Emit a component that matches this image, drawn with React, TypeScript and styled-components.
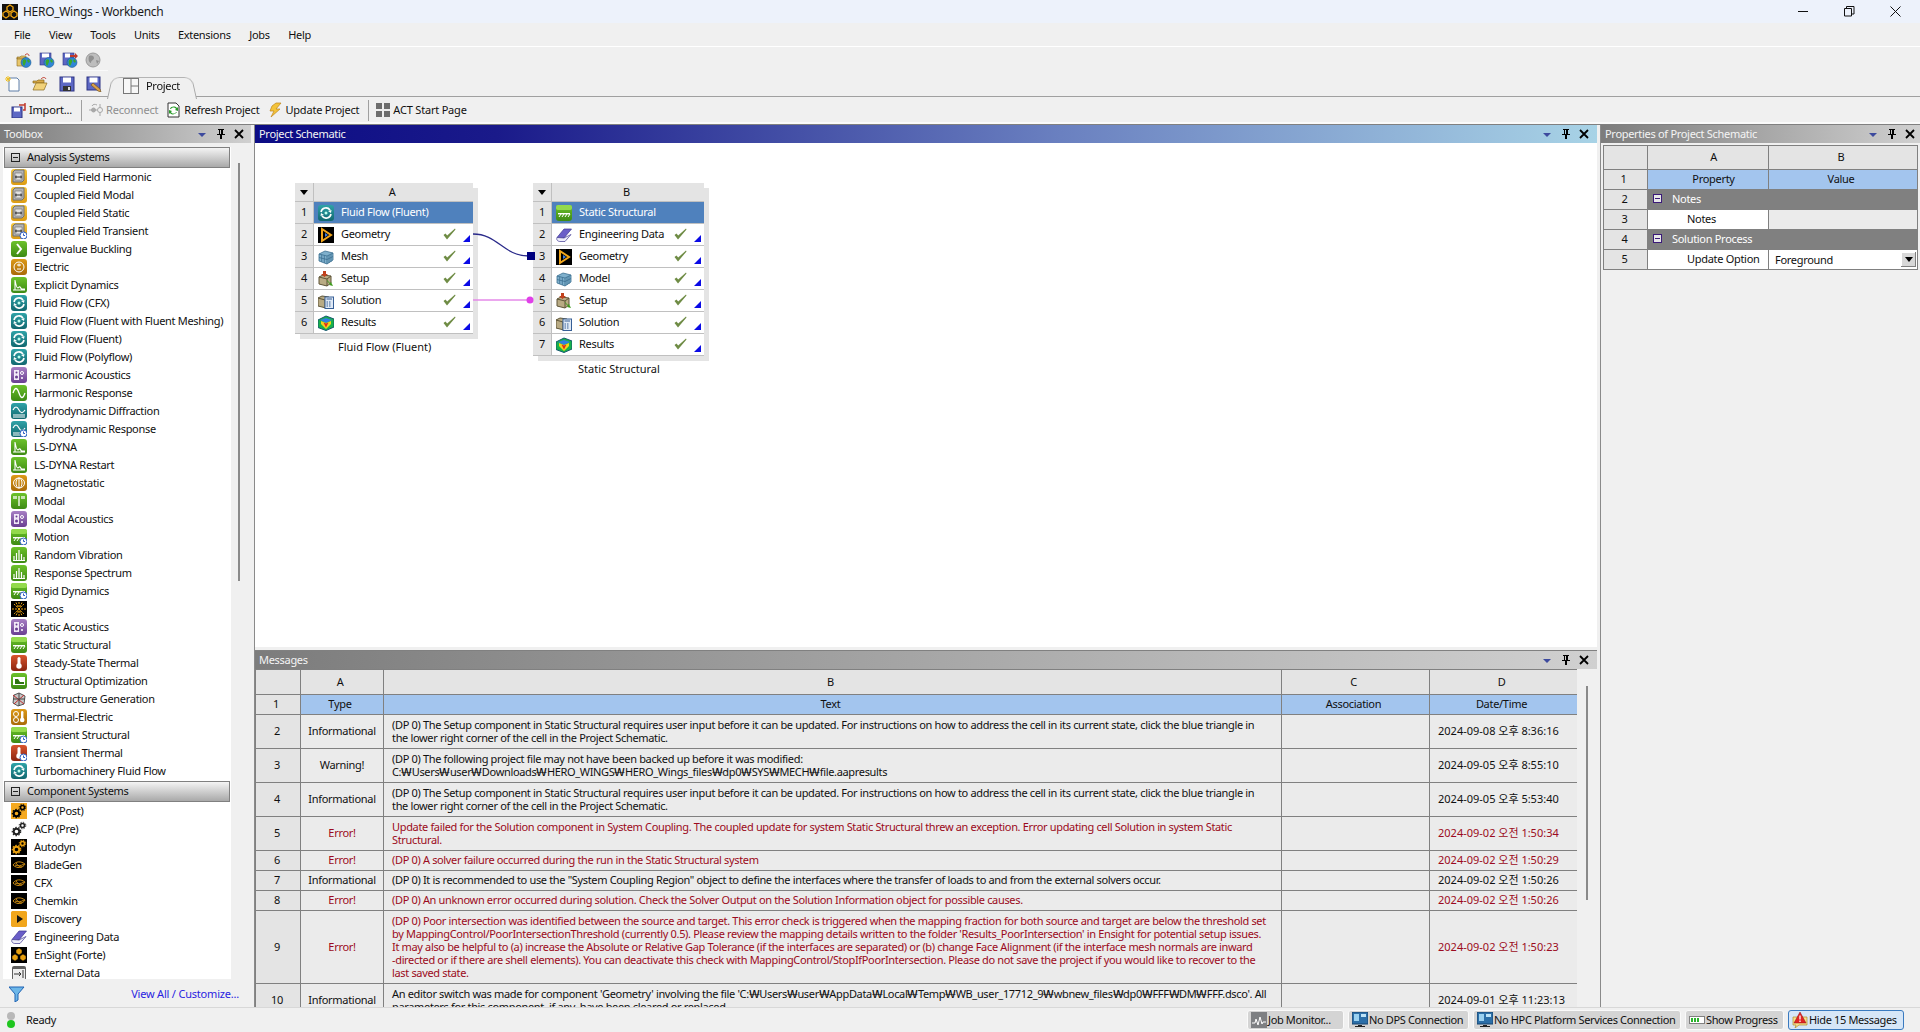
import React from "react";
import styled, { createGlobalStyle } from "styled-components";

const FONT = `"Noto Sans", "Noto Sans CJK KR", sans-serif`;

const GlobalStyle = createGlobalStyle`
  html, body { margin: 0; padding: 0; background: #f0f0f0; }
  body { font-family: ${FONT}; font-size: 11px; letter-spacing: -0.3px; color: #101010; overflow: hidden; }
  * { box-sizing: border-box; }
`;

/* Noto sits a pixel lower in its line box than the original UI font */
const Txt = styled.span`
  margin-bottom: 2px;
  white-space: nowrap;
`;

/* ---------- icons ---------- */

type Tone = "green" | "teal" | "purple" | "orange" | "red" | "yellow" | "black" | "none";

const TONES: Record<Tone, [string, string]> = {
  green: ["#6cc22a", "#3d8a14"],
  teal: ["#2fa3a8", "#11676f"],
  purple: ["#a77fc4", "#6a3f92"],
  orange: ["#dd9a18", "#a96a08"],
  red: ["#d9552d", "#8a2410"],
  yellow: ["#f4c53c", "#dd9c12"],
  black: ["#000000", "#000000"],
  none: ["transparent", "transparent"],
};

const ToneBox = ({ tone, id }: { tone: Tone; id: string }) =>
  tone === "none" ? null : (
    <>
      <defs>
        <linearGradient id={id} x1="0" y1="0" x2="0" y2="1">
          <stop offset="0" stopColor={TONES[tone][0]} />
          <stop offset="1" stopColor={TONES[tone][1]} />
        </linearGradient>
      </defs>
      <rect x="0" y="0" width="16" height="16" rx={tone === "black" ? 0 : 3} fill={`url(#${id})`} />
    </>
  );

const Gears = ({ c }: { c: string }) => (
  <g fill="none" stroke={c}>
    <circle cx="5.5" cy="10.5" r="2.8" strokeWidth="2" />
    <circle cx="5.5" cy="10.5" r="4.2" strokeWidth="1.2" strokeDasharray="1.5 1.5" />
    <circle cx="11.5" cy="4.5" r="2" strokeWidth="1.6" />
    <circle cx="11.5" cy="4.5" r="3.3" strokeWidth="1" strokeDasharray="1.3 1.3" />
  </g>
);

const GLYPHS: Record<string, { tone: Tone; art: React.ReactNode }> = {
  coupled: {
    tone: "yellow",
    art: (
      <>
        <path d="M2 3l2-2h9v10l-2 2H2z" fill="#b4b4b4" stroke="#707070" />
        <path d="M4 4h7v7H4z" fill="#e2e2e2" stroke="#707070" strokeWidth=".6" />
        <path d="M4 8h7M5 6.500v3M10 6.500v3" stroke="#333" fill="none" />
      </>
    ),
  },
  eigen: { tone: "green", art: <path d="M6 3l4 5-4 5" fill="none" stroke="#fff" strokeWidth="2" /> },
  electric: {
    tone: "orange",
    art: (
      <>
        <circle cx="8" cy="8" r="5" fill="none" stroke="#fff" />
        <path d="M6 6h4M8 4.5v3M6 10h4" stroke="#fff" />
      </>
    ),
  },
  decay: {
    tone: "green",
    art: <path d="M2 13h12M4 13V3c1 6 2 8 3 8s1-2 2-1 1 2 2 2 2 0 3 0" fill="none" stroke="#fff" strokeWidth="1.1" />,
  },
  fluid: {
    tone: "teal",
    art: (
      <>
        <path d="M3 7a5 5 0 0 1 9-2M13 9a5 5 0 0 1-9 2" fill="none" stroke="#fff" strokeWidth="1.6" />
        <path d="M10 6l3.500-1L13 8zM6 10l-3.500 1L3 8z" fill="#fff" />
        <circle cx="8" cy="8" r="1.500" fill="#bfe" />
      </>
    ),
  },
  acoustics: {
    tone: "purple",
    art: (
      <>
        <rect x="3" y="3" width="5" height="10" fill="#f1e8f7" />
        <circle cx="5.500" cy="10" r="1.500" fill="#6a3f92" />
        <circle cx="5.500" cy="5.500" r="1" fill="#6a3f92" />
        <circle cx="11" cy="6" r="1.500" fill="none" stroke="#fff" />
        <circle cx="11" cy="11" r="1" fill="#fff" />
      </>
    ),
  },
  sine: { tone: "green", art: <path d="M2 8c2-6 4-6 6 0s4 6 6 0" fill="none" stroke="#fff" strokeWidth="1.3" /> },
  hydro: {
    tone: "teal",
    art: <path d="M2 7c2-4 4-4 6 0s4 3 6 0M2 12h12M2 14h12" fill="none" stroke="#fff" strokeWidth="1.2" />,
  },
  magneto: {
    tone: "orange",
    art: (
      <>
        <ellipse cx="8" cy="8" rx="5.500" ry="5" fill="none" stroke="#fff" />
        <ellipse cx="8" cy="8" rx="3" ry="5" fill="none" stroke="#fff" />
        <path d="M8 3v10" stroke="#fff" />
      </>
    ),
  },
  modal: {
    tone: "green",
    art: <path d="M8 3v10M3 3v3M5 3v3M11 3v3M13 3v3" fill="none" stroke="#fff" strokeWidth="1.3" />,
  },
  structural: {
    tone: "green",
    art: (
      <>
        <rect x="0" y="0" width="16" height="5" rx="2" fill="#93da4c" />
        <rect x="2" y="8" width="12" height="1.400" fill="#fff" />
        <path d="M3 12l2-3M6 12l2-3M9 12l2-3M12 12l2-3" stroke="#fff" />
      </>
    ),
  },
  bars: {
    tone: "green",
    art: <path d="M3 13V9M5.500 13V6M8 13V3M10.500 13V7M13 13v-3M2 13.500h12" fill="none" stroke="#fff" strokeWidth="1.200" />,
  },
  speos: {
    tone: "black",
    art: <path d="M8 1v14M1 8h14M3 3l10 10M13 3L3 13M5 1.500l6 13M11 1.500l-6 13" stroke="#e8a010" strokeDasharray="2 1" />,
  },
  thermal: {
    tone: "red",
    art: (
      <>
        <rect x="6.500" y="2" width="3" height="8" rx="1.500" fill="#fff" />
        <circle cx="8" cy="11" r="2.700" fill="#fff" />
      </>
    ),
  },
  optimize: {
    tone: "green",
    art: (
      <>
        <rect x="2" y="4" width="12" height="8" fill="#fff" />
        <path d="M4 6h3l2 3h4v2H4z" fill="#2e7410" />
      </>
    ),
  },
  substructure: {
    tone: "none",
    art: (
      <>
        <path d="M3 4l5-2 6 3-1 8-6 2-5-3z" fill="#c7c7c7" stroke="#555" />
        <path d="M2 4l11 9M13 4L3 13" stroke="#c02a2a" fill="none" />
        <path d="M8 2v13M2 8h12" stroke="#444" />
      </>
    ),
  },
  thermoel: {
    tone: "orange",
    art: (
      <>
        <rect x="10" y="2" width="2.400" height="8" rx="1.200" fill="#fff" />
        <circle cx="11.200" cy="11" r="2.300" fill="#fff" />
        <circle cx="5" cy="5" r="2.500" fill="none" stroke="#fff" />
        <circle cx="5" cy="11" r="2.500" fill="none" stroke="#fff" />
      </>
    ),
  },
  gearsOrange: { tone: "none", art: <><rect width="16" height="16" fill="#f5a920" /><Gears c="#000" /></> },
  gearsWhite: { tone: "none", art: <Gears c="#222" /> },
  gearsBlack: { tone: "black", art: <Gears c="#e8a010" /> },
  blade: {
    tone: "black",
    art: <path d="M2 8c3-4 8-4 12-1-2 4-8 5-12 1zM4 8c3 1 6 1 9-1M5 6c2 3 4 4 6 4" fill="none" stroke="#c98a12" />,
  },
  discovery: {
    tone: "orange",
    art: (
      <>
        <rect width="16" height="16" rx="2" fill="#f1a61c" />
        <path d="M6 4l6 4-6 4z" fill="#111" />
      </>
    ),
  },
  book: {
    tone: "none",
    art: (
      <>
        <path d="M1 10.500L8 2h7.500L8 11z" fill="#6a5ec8" stroke="#3e3690" strokeWidth=".7" />
        <path d="M1 10.500C0 13 2 14.500 4 14.500h5l6-7-7 3.500z" fill="#eeeefa" stroke="#3e3690" strokeWidth=".7" />
      </>
    ),
  },
  ensight: {
    tone: "black",
    art: (
      <g fill="#e8a010" stroke="#000" strokeWidth=".5">
        <path d="M8 1l3 2v3l-3 2-3-2V3z" />
        <path d="M4 7l3 2v3l-3 2-3-2V9z" />
        <path d="M12 7l3 2v3l-3 2-3-2V9z" />
      </g>
    ),
  },
  external: {
    tone: "none",
    art: (
      <>
        <rect x="1" y="1" width="14" height="14" rx="2" fill="#5f5f5f" />
        <path d="M2 4h12v10H2z" fill="#eee" />
        <path d="M3 9h7M8 7l2 2-2 2M12 5v8" stroke="#333" fill="none" />
      </>
    ),
  },
  geometry: {
    tone: "black",
    art: (
      <>
        <path d="M4 2l9 6-9 6z" fill="none" stroke="#f1a61c" strokeWidth="2" />
        <path d="M7 6l3 2-3 2z" fill="#3e7ee0" />
      </>
    ),
  },
  mesh: {
    tone: "none",
    art: (
      <g stroke="#3b6e90" strokeWidth=".8" fill="#7fb0cc">
        <path d="M1 5l6-3 8 2v7l-6 4-8-3z" />
        <path d="M1 5l8 2 6-3M9 7v8M3.700 5.700V13M6.300 6.300V14M11 6v8M13 5v8M1 8.500l8 2 6-3" fill="none" />
      </g>
    ),
  },
  setup: {
    tone: "none",
    art: (
      <>
        <path d="M1 6l4-2 8 1v7l-4 3-8-2z" fill="#b9ab84" stroke="#5e5538" />
        <path d="M1 6l8 2 4-3M9 8v7" fill="none" stroke="#5e5538" />
        <path d="M5 0h3v3h2L6.500 6 3 3h2z" fill="#c2411c" />
        <path d="M9 9l3 3 1-1 2 4-4-1 1-1-3-3z" fill="#3f9a1e" />
      </>
    ),
  },
  solution: {
    tone: "none",
    art: (
      <>
        <path d="M0 5l4-2 7 1v8l-3 3-8-2z" fill="#b9ab84" stroke="#5e5538" />
        <path d="M0 5l7 2v8" fill="none" stroke="#5e5538" />
        <rect x="7" y="4" width="8.500" height="11.500" fill="#dfe9f5" stroke="#375f96" />
        <path d="M8.500 6h5.500M8.500 9h1.500M11 9h1.500M8.500 11h1.500M11 11h1.500M8.500 13h1.500M11 13h1.500" stroke="#375f96" />
      </>
    ),
  },
  results: {
    tone: "none",
    art: (
      <>
        <path d="M0 5l8-4 8 3v8l-8 3.500-8-3z" fill="#18b24a" stroke="#15566f" />
        <path d="M2 5l6-2 6 2-6 3z" fill="#2f7fe0" />
        <path d="M3 6l5 2 5-2v3l-5 5-5-5z" fill="#f1d51c" />
        <path d="M5.500 7.500L8 8.500l2.500-1L8 12.500z" fill="#e02a1a" />
      </>
    ),
  },
};

let gradientSeq = 0;

const ClockBadge = () => (
  <g>
    <circle cx="12.500" cy="12.500" r="3.500" fill="#fff" stroke="#2d5fc4" />
    <path d="M12.500 10.500v2h1.500" fill="none" stroke="#2d5fc4" />
  </g>
);

const IconSvg = styled.svg`
  width: 16px;
  height: 16px;
  flex: none;
  display: block;
`;

const Icon = ({ name, clock }: { name: string; clock?: boolean }) => {
  const glyph = GLYPHS[name];
  const id = `tone-${name}-${gradientSeq++}`;
  return (
    <IconSvg viewBox="0 0 16 16">
      <ToneBox tone={glyph.tone} id={id} />
      {glyph.art}
      {clock && <ClockBadge />}
    </IconSvg>
  );
};

const Globe = () => (
  <>
    <circle cx="10" cy="10.500" r="5" fill="#2f86d6" stroke="#15507f" strokeWidth=".5" />
    <path d="M7 8c2-2 4 0 3 2s-1 3-2 4c-1-1-2-4-1-6zM12 7l2 2-1 2-2-2z" fill="#3ba82d" />
  </>
);

const TOOL_ART: Record<string, React.ReactNode> = {
  openGlobe: (
    <>
      <path d="M1 5h3l1-1h5v3H1zM1 6h9v8H1z" fill="#e8c66b" stroke="#8a6a1c" strokeWidth=".6" />
      <path d="M9 3c2-2 4-1 4 1" fill="none" stroke="#c0392b" />
      <Globe />
    </>
  ),
  saveGlobe: (
    <>
      <rect x="1" y="1" width="11" height="12" fill="#5d68c4" stroke="#2c3382" strokeWidth=".6" />
      <rect x="3" y="1.500" width="7" height="4" fill="#fff" />
      <Globe />
    </>
  ),
  saveAsGlobe: (
    <>
      <rect x="1" y="1" width="11" height="12" fill="#5d68c4" stroke="#2c3382" strokeWidth=".6" />
      <rect x="3" y="1.500" width="5" height="4" fill="#fff" />
      <path d="M8 3h5V1l3 3-3 3V5H8z" fill="#c0392b" />
      <Globe />
    </>
  ),
  greyGlobe: (
    <>
      <circle cx="8" cy="8" r="7" fill="#bdbdbd" stroke="#9a9a9a" />
      <path d="M4 4c3-1 5 0 5 2s-3 2-3 5c-2 0-3-4-2-7zM11 8l3 1-2 3z" fill="#8f8f8f" />
    </>
  ),
  newDoc: (
    <>
      <path d="M4 2h8l2 2v11H4z" fill="#fff" stroke="#5f7fa8" />
      <path d="M3 0v6M0 3h6M1 1l4 4M5 1L1 5" stroke="#f0c020" />
    </>
  ),
  openFolder: (
    <>
      <path d="M1 5h4l1-1h6v3H1z" fill="#d8a948" stroke="#8a6a1c" strokeWidth=".7" />
      <path d="M1 14l3-7h11l-3 7z" fill="#f1d27a" stroke="#8a6a1c" strokeWidth=".7" />
      <path d="M9 3c2-2 4-2 5 0" fill="none" stroke="#c0392b" />
    </>
  ),
  save: (
    <>
      <rect x="1" y="1" width="14" height="14" fill="#5d68c4" stroke="#2c3382" />
      <rect x="4" y="1.500" width="8" height="5" fill="#fff" />
      <rect x="4" y="10" width="8" height="5" fill="#333" />
      <rect x="9" y="11" width="2" height="3" fill="#ddd" />
    </>
  ),
  saveAs: (
    <>
      <rect x="1" y="1" width="13" height="13" fill="#5d68c4" stroke="#2c3382" />
      <rect x="3.500" y="1.500" width="8" height="5" fill="#fff" />
      <path d="M5 9l7 6 3 1-1-3-7-6z" fill="#d9a04a" stroke="#6b4a14" strokeWidth=".6" />
    </>
  ),
  tabLayout: (
    <>
      <rect x=".5" y=".5" width="15" height="15" fill="#f7f7f7" stroke="#777" />
      <path d="M8 .5v15M8 8h8" stroke="#777" />
    </>
  ),
  importDoc: (
    <>
      <rect x="1" y="5" width="10" height="11" fill="#5d68c4" stroke="#2c3382" />
      <rect x="3" y="5.500" width="6" height="4" fill="#fff" />
      <path d="M8 3h6V1M14 1v7h-2" fill="none" stroke="#c0392b" strokeWidth="1.500" />
    </>
  ),
  reconnect: (
    <g fill="#a8a8a8" stroke="#a8a8a8">
      <path d="M1 8h3M7 8h2" fill="none" />
      <circle cx="5.500" cy="8" r="2" />
      <circle cx="12" cy="8" r="2.500" fill="none" />
      <path d="M12 2v4M12 10v4" fill="none" />
      <path d="M4 4c1-2 3-2 5-1" fill="none" />
    </g>
  ),
  refresh: (
    <>
      <path d="M2 1h8l3 3v11H2z" fill="#fff" stroke="#333" />
      <path d="M5 7c1-2 4-2 5 0l-1 1 3 1V5l-1 1C9 4 5 4 4 7zM10 10c-1 2-4 2-5 0l1-1-3-1v4l1-1c1 2 5 2 7-1z" fill="#2a9c2a" />
    </>
  ),
  bolt: <path d="M9 1h5L9 7h4L4 15l3-6H3l2-5z" fill="#f3c33a" stroke="#c0851a" strokeWidth=".7" />,
  actGrid: <path d="M1 1h6v6H1zM9 1h6v6H9zM1 9h6v6H1zM9 9h6v6H9z" fill="#6e6e6e" />,
  monitor: (
    <>
      <rect width="16" height="16" fill="#7e8083" />
      <path d="M1 11h3l1-4 2 6 2-8 2 7 1-2h3" fill="none" stroke="#fff" />
    </>
  ),
  screen: (
    <>
      <rect x="0" y="0" width="16" height="12" fill="#2c6fa8" stroke="#17456e" />
      <rect x="2" y="2" width="5" height="7" fill="#9bd1f0" />
      <rect x="9" y="2" width="5" height="3" fill="#bde3f7" />
      <path d="M6 13h4v1h3v1H3v-1h3z" fill="#222" />
    </>
  ),
  progress: (
    <>
      <rect x=".5" y="4.500" width="15" height="7" fill="#fff" stroke="#808080" />
      <path d="M2 6h2v4H2zM5 6h2v4H5zM8 6h2v4H8z" fill="#29b32c" />
    </>
  ),
  alert: (
    <>
      <path d="M1 13h3l-1 3 4-3h8V5H1z" fill="#f6e08c" stroke="#b08a2a" strokeWidth=".7" />
      <path d="M8 0l6 11H2z" fill="#e02424" stroke="#901010" strokeWidth=".5" />
      <path d="M8 3.500v4M8 8.500v1.500" stroke="#fff" strokeWidth="1.300" />
    </>
  ),
  funnel: <path d="M0 1h15L9 8v6l-3 2V8z" fill="#6db7e8" stroke="#1f63b3" />,
};

const Tool = ({ name }: { name: string }) => <IconSvg viewBox="0 0 16 16">{TOOL_ART[name]}</IconSvg>;

/* ---------- chrome ---------- */

const Page = styled.div`
  width: 1920px;
  height: 1032px;
  display: flex;
  flex-direction: column;
  overflow: hidden;
  background: #f0f0f0;
`;

const TitleBar = styled.div`
  height: 23px;
  flex: none;
  display: flex;
  align-items: center;
  padding-left: 2px;
  background: #edf2fb;
  font-size: 12px;
  color: #1a1a1a;
`;

const AppLogo = styled.svg`
  width: 16px;
  height: 16px;
  flex: none;
`;

const TitleText = styled.span`
  margin-left: 5px;
  flex: 1;
`;

const WindowButton = styled.button`
  width: 46px;
  height: 23px;
  border: 0;
  padding: 0;
  background: transparent;
  display: flex;
  align-items: center;
  justify-content: center;
`;

const WindowGroup = styled.div`
  display: flex;
  margin-right: 2px;
`;

const MenuBar = styled.div`
  height: 24px;
  flex: none;
  display: flex;
  align-items: center;
  gap: 18.500px;
  padding-left: 14px;
  border-bottom: 1px solid #ffffff;
`;

const ToolRow = styled.div`
  height: 24px;
  flex: none;
  display: flex;
  align-items: center;
  gap: 7px;
  padding: 2px 0 0 12px;
  margin: 0 1812px 0 4px;
  border-bottom: 1px solid #fafafa;
`;

const TabRow = styled.div`
  height: 26px;
  flex: none;
  display: flex;
  align-items: center;
  padding: 1px 0 0 5px;
  gap: 11px;
  border-bottom: 1px solid #a0a0a0;
`;

const ProjectTab = styled.div`
  position: relative;
  margin: 2px 0 -2px 0;
  height: 24px;
  width: 66px;
  padding-left: 10px;
  display: flex;
  align-items: center;
  gap: 7px;
  z-index: 0;
  &::before {
    content: "";
    position: absolute;
    inset: 0 -18px -1px -6px;
    z-index: -1;
    background: #f0f0f0;
    border: 1px solid #a8a8a8;
    border-bottom: 0;
    border-radius: 9px 9px 0 0;
    transform: perspective(28px) rotateX(8deg);
    transform-origin: bottom;
  }
`;

const CommandRow = styled.div`
  height: 28px;
  flex: none;
  display: flex;
  align-items: center;
  padding: 0 0 1px 11px;
  border-bottom: 1px solid #808080;
  box-shadow: inset 0 -3px 0 -1px #fafafa;
`;

const Command = styled.span<{ $off?: boolean }>`
  display: flex;
  align-items: center;
  gap: 2px;
  margin-right: 8px;
  letter-spacing: -0.2px;
  color: ${(p) => (p.$off ? "#8e8e8e" : "#101010")};
`;

const CommandSep = styled.i`
  width: 1px;
  height: 21px;
  background: #a0a0a0;
  margin: 0 6px 0 1px;
`;

const Workspace = styled.div`
  flex: 1;
  min-height: 0;
  display: flex;
  gap: 3px;
`;

const PanelHead = styled.div<{ $tint?: "grey" | "blue"; $right?: number }>`
  height: 18px;
  flex: none;
  display: flex;
  align-items: center;
  padding: 0 ${(p) => p.$right ?? 7}px 0 4px;
  color: #f4f4f4;
  background: ${(p) =>
    p.$tint === "blue"
      ? "linear-gradient(90deg, #0c0c85 0%, #1a1a8a 18%, #6a80c0 60%, #a8d3e6 100%)"
      : "linear-gradient(90deg, #7c7c7c 0%, #d0d0d0 100%)"};
`;

const HeadTitle = styled(Txt)`
  flex: 1;
`;

const HeadIcons = styled.div`
  display: flex;
  align-items: center;
  gap: 7px;
  & > svg:last-child {
    margin-left: -1px;
  }
`;

const HeadSvg = styled.svg`
  width: 12px;
  height: 12px;
  display: block;
`;

const PanelControls = () => (
  <HeadIcons>
    <HeadSvg viewBox="0 0 12 12">
      <path d="M2 5h8L6 9z" fill="#3d4a9e" />
    </HeadSvg>
    <HeadSvg viewBox="0 0 12 12">
      <path d="M3 1h6v1H8v4h2v1H7v4H5V7H2V6h2V2H3zM5 2v4h1V2z" fill="#000" />
    </HeadSvg>
    <HeadSvg viewBox="0 0 12 12">
      <path d="M2 2l8 8M10 2l-8 8" stroke="#000" strokeWidth="1.800" fill="none" />
    </HeadSvg>
  </HeadIcons>
);

/* ---------- toolbox ---------- */

const ToolboxPanel = styled.aside`
  width: 251px;
  flex: none;
  display: flex;
  flex-direction: column;
`;

const ToolboxBody = styled.div`
  flex: 1;
  min-height: 0;
  display: flex;
  padding: 4px 0 0 3px;
`;

const ToolList = styled.div`
  width: 228px;
  height: 832px;
  overflow: hidden;
  background: #fff;
`;

const ToolboxScroll = styled.div`
  margin: 16px 0 0 7px;
  width: 2px;
  height: 418px;
  background: #8a8a8a;
`;

const GroupHead = styled.div<{ $gap?: number }>`
  height: 21px;
  margin: ${(p) => p.$gap ?? 0}px 1px 0 1px;
  display: flex;
  align-items: center;
  gap: 7px;
  padding-left: 6px;
  border: 1px solid #808080;
  background: linear-gradient(180deg, #f4f4f4 0%, #a9a9a9 100%);
`;

const MinusBox = styled.i<{ $dark?: boolean }>`
  width: 9px;
  height: 9px;
  flex: none;
  display: flex;
  align-items: center;
  justify-content: center;
  border: 1px solid ${(p) => (p.$dark ? "#3b1a7a" : "#222")};
  background: ${(p) => (p.$dark ? "#e8e8e8" : "transparent")};
  &::after {
    content: "";
    width: 5px;
    height: 1px;
    background: ${(p) => (p.$dark ? "#3b1a7a" : "#222")};
  }
`;

const ToolItem = styled.div`
  height: 18px;
  display: flex;
  align-items: center;
  gap: 7px;
  padding-left: 8px;
`;

const ToolboxFoot = styled.div`
  height: 28px;
  flex: none;
  display: flex;
  align-items: center;
  justify-content: space-between;
  padding: 0 12px 0 9px;
  color: #2a1ee0;
`;

const analysis: [string, string, boolean?][] = [
  ["Coupled Field Harmonic", "coupled"],
  ["Coupled Field Modal", "coupled"],
  ["Coupled Field Static", "coupled"],
  ["Coupled Field Transient", "coupled", true],
  ["Eigenvalue Buckling", "eigen"],
  ["Electric", "electric"],
  ["Explicit Dynamics", "decay"],
  ["Fluid Flow (CFX)", "fluid"],
  ["Fluid Flow (Fluent with Fluent Meshing)", "fluid"],
  ["Fluid Flow (Fluent)", "fluid"],
  ["Fluid Flow (Polyflow)", "fluid"],
  ["Harmonic Acoustics", "acoustics"],
  ["Harmonic Response", "sine"],
  ["Hydrodynamic Diffraction", "hydro"],
  ["Hydrodynamic Response", "hydro", true],
  ["LS-DYNA", "decay"],
  ["LS-DYNA Restart", "decay"],
  ["Magnetostatic", "magneto"],
  ["Modal", "modal"],
  ["Modal Acoustics", "acoustics"],
  ["Motion", "structural", true],
  ["Random Vibration", "bars"],
  ["Response Spectrum", "bars"],
  ["Rigid Dynamics", "structural", true],
  ["Speos", "speos"],
  ["Static Acoustics", "acoustics"],
  ["Static Structural", "structural"],
  ["Steady-State Thermal", "thermal"],
  ["Structural Optimization", "optimize"],
  ["Substructure Generation", "substructure"],
  ["Thermal-Electric", "thermoel"],
  ["Transient Structural", "structural", true],
  ["Transient Thermal", "thermal", true],
  ["Turbomachinery Fluid Flow", "fluid"],
];

const components: [string, string][] = [
  ["ACP (Post)", "gearsOrange"],
  ["ACP (Pre)", "gearsWhite"],
  ["Autodyn", "gearsBlack"],
  ["BladeGen", "blade"],
  ["CFX", "blade"],
  ["Chemkin", "blade"],
  ["Discovery", "discovery"],
  ["Engineering Data", "book"],
  ["EnSight (Forte)", "ensight"],
  ["External Data", "external"],
];

/* ---------- schematic ---------- */

const CenterColumn = styled.div`
  flex: 1;
  min-width: 0;
  display: flex;
  flex-direction: column;
  gap: 3px;
  border-left: 1px solid #8a8a8a;
`;

const SchematicPanel = styled.section`
  height: 522px;
  flex: none;
  display: flex;
  flex-direction: column;
`;

const Canvas = styled.div`
  position: relative;
  flex: 1;
  background: #fff;
`;

const SystemBox = styled.div<{ $x: number; $w: number }>`
  position: absolute;
  left: ${(p) => p.$x}px;
  top: 40px;
  width: ${(p) => p.$w}px;
`;

const SystemTable = styled.div`
  box-shadow: 5px 5px 0 #e4e4e4;
  background: #e4e4e4;
`;

const SystemRow = styled.div<{ $head?: boolean }>`
  height: ${(p) => (p.$head ? 19 : 22)}px;
  display: flex;
`;

const SysNum = styled.div`
  width: 19px;
  flex: none;
  display: flex;
  align-items: center;
  justify-content: center;
  background: #e4e4e4;
  border-right: 1px solid #c0c0c0;
  border-bottom: 1px solid #c0c0c0;
`;

const SysCell = styled.div<{ $state?: "title" | "plain" | "letter" }>`
  position: relative;
  flex: 1;
  display: flex;
  align-items: center;
  gap: 7px;
  padding: 0 ${(p) => (p.$state === "letter" ? 7 : 0)}px 0 4px;
  border-bottom: 1px solid #c0c0c0;
  justify-content: ${(p) => (p.$state === "letter" ? "center" : "flex-start")};
  background: ${(p) =>
    p.$state === "title" ? "#4f81bd" : p.$state === "letter" ? "#e4e4e4" : "#fff"};
  color: ${(p) => (p.$state === "title" ? "#fff" : "#101010")};
`;

const CheckSvg = styled.svg`
  position: absolute;
  right: 17px;
  top: 4px;
  width: 13px;
  height: 12px;
`;

const Corner = styled.i`
  position: absolute;
  right: 3px;
  bottom: 3px;
  width: 0;
  height: 0;
  border-left: 7px solid transparent;
  border-bottom: 7px solid #0a0ae6;
`;

const SysCaption = styled.div<{ $left: number }>`
  margin: 5px 0 0 ${(p) => p.$left}px;
  white-space: nowrap;
  letter-spacing: 0;
`;

const Wires = styled.svg`
  position: absolute;
  left: 0;
  top: 0;
  width: 400px;
  height: 220px;
  pointer-events: none;
`;

const DownArrow = styled.i`
  width: 0;
  height: 0;
  border-left: 4.500px solid transparent;
  border-right: 4.500px solid transparent;
  border-top: 5px solid #000;
`;

const SystemBlock = ({
  x,
  w,
  letter,
  rows,
  caption,
  captionLeft,
}: {
  x: number;
  w: number;
  letter: string;
  rows: [string, string][];
  caption: string;
  captionLeft: number;
}) => (
  <SystemBox $x={x} $w={w}>
    <SystemTable>
      <SystemRow $head>
        <SysNum>
          <DownArrow />
        </SysNum>
        <SysCell $state="letter">
          <Txt>{letter}</Txt>
        </SysCell>
      </SystemRow>
      {rows.map(([label, icon], i) => (
        <SystemRow key={label}>
          <SysNum>
            <Txt>{i + 1}</Txt>
          </SysNum>
          <SysCell $state={i === 0 ? "title" : "plain"}>
            <Icon name={icon} />
            <Txt>{label}</Txt>
            {i > 0 && (
              <>
                <CheckSvg viewBox="0 0 13 12">
                  <path d="M.5 7L4 11.500 12.500 1.500 12 .5 4.200 7.500 2.500 5.500z" fill="#6f8c45" />
                </CheckSvg>
                <Corner />
              </>
            )}
          </SysCell>
        </SystemRow>
      ))}
    </SystemTable>
    <SysCaption $left={captionLeft}>{caption}</SysCaption>
  </SystemBox>
);

/* ---------- messages ---------- */

const MessagesPanel = styled.section`
  flex: 1;
  min-height: 0;
  display: flex;
  flex-direction: column;
  border-top: 1px solid #808080;
`;

const MessagesBody = styled.div`
  flex: 1;
  min-height: 0;
  display: flex;
`;

const GridClip = styled.div`
  width: 1322px;
  flex: none;
  overflow: hidden;
`;

const MessagesScroll = styled.div`
  margin: 17px 0 0 9px;
  width: 2px;
  height: 214px;
  background: #8a8a8a;
`;

const GridTable = styled.table`
  width: 100%;
  border-collapse: collapse;
  table-layout: fixed;
  & td,
  & th {
    border: 1px solid #808080;
    font-weight: 400;
    padding: 0 0 2px;
    font-size: 11px;
    line-height: 13px;
  }
  & th {
    padding-right: 4px;
  }
`;

const LetterRow = styled.tr<{ $h?: number }>`
  height: ${(p) => p.$h ?? 25}px;
  & th {
    background: #e4e4e4;
    text-align: center;
  }
`;

const LabelRow = styled.tr`
  height: 20px;
  & th {
    background: #a3c5ee;
    text-align: center;
  }
  & th:first-child {
    background: #e4e4e4;
  }
`;

const ShiftedHead = styled.th`
  padding-left: 15px !important;
`;

const NumCell = styled.td`
  background: #e4e4e4;
  text-align: center;
  padding-right: 2px !important;
`;

const TextCell = styled.td<{ $center?: boolean; $err?: boolean }>`
  background: #ebebeb;
  padding-left: 7px !important;
  padding-right: 7px !important;
  white-space: nowrap;
  overflow: hidden;
  text-align: ${(p) => (p.$center ? "center" : "left")};
  color: ${(p) => (p.$err ? "#9b0a20" : "#101010")};
`;

const MessageLine = styled.div`
  margin-left: 1px;
  letter-spacing: -0.34px;
`;

const MessageRow = styled.tr<{ $h: number }>`
  height: ${(p) => p.$h}px;
`;

const DateCell = styled(TextCell)`
  padding-left: 8px !important;
  padding-right: 0 !important;
  letter-spacing: 0;
`;

/* the path separator renders as a wide won sign in the Korean system font */
const Won = styled.span`
  display: inline-block;
  width: 10.500px;
  text-align: center;
  letter-spacing: 0;
  transform: scaleX(1.450);
`;

const withWon = (line: string) =>
  line.split("₩").map((part, i) => (
    <React.Fragment key={i}>
      {i > 0 && <Won>₩</Won>}
      {part}
    </React.Fragment>
  ));

type Message = { n: number; type: string; lines: string[]; date: string; h: number };

const msgs: Message[] = [
  {
    n: 2,
    type: "Informational",
    lines: [
      "(DP 0) The Setup component in Static Structural requires user input before it can be updated. For instructions on how to address the cell in its current state, click the blue triangle in",
      "the lower right corner of the cell in the Project Schematic.",
    ],
    date: "2024-09-08 오후 8:36:16",
    h: 34,
  },
  {
    n: 3,
    type: "Warning!",
    lines: [
      "(DP 0) The following project file may not have been backed up before it was modified:",
      "C:₩Users₩user₩Downloads₩HERO_WINGS₩HERO_Wings_files₩dp0₩SYS₩MECH₩file.aapresults",
    ],
    date: "2024-09-05 오후 8:55:10",
    h: 34,
  },
  {
    n: 4,
    type: "Informational",
    lines: [
      "(DP 0) The Setup component in Static Structural requires user input before it can be updated. For instructions on how to address the cell in its current state, click the blue triangle in",
      "the lower right corner of the cell in the Project Schematic.",
    ],
    date: "2024-09-05 오후 5:53:40",
    h: 34,
  },
  {
    n: 5,
    type: "Error!",
    lines: [
      "Update failed for the Solution component in System Coupling. The coupled update for system Static Structural threw an exception. Error updating cell Solution in system Static",
      "Structural.",
    ],
    date: "2024-09-02 오전 1:50:34",
    h: 34,
  },
  {
    n: 6,
    type: "Error!",
    lines: ["(DP 0) A solver failure occurred during the run in the Static Structural system"],
    date: "2024-09-02 오전 1:50:29",
    h: 20,
  },
  {
    n: 7,
    type: "Informational",
    lines: [
      '(DP 0) It is recommended to use the "System Coupling Region" object to define the interfaces where the transfer of loads to and from the external solvers occur.',
    ],
    date: "2024-09-02 오전 1:50:26",
    h: 20,
  },
  {
    n: 8,
    type: "Error!",
    lines: ["(DP 0) An unknown error occurred during solution. Check the Solver Output on the Solution Information object for possible causes."],
    date: "2024-09-02 오전 1:50:26",
    h: 20,
  },
  {
    n: 9,
    type: "Error!",
    lines: [
      "(DP 0) Poor intersection was identified between the source and target. This error check is triggered when the mapping fraction for both source and target are below the threshold set",
      "by MappingControl/PoorIntersectionThreshold (currently 0.5). Please review the mapping details written to the folder 'Results_PoorIntersection' in Ensight for potential setup issues.",
      "It may also be helpful to (a) increase the Absolute or Relative Gap Tolerance (if the interfaces are separated) or (b) change Face Alignment (if the interface mesh normals are inward",
      "-directed or if there are shell elements). You can deactivate this check with MappingControl/StopIfPoorIntersection. Please do not save the project if you would like to recover to the",
      "last saved state.",
    ],
    date: "2024-09-02 오전 1:50:23",
    h: 73,
  },
  {
    n: 10,
    type: "Informational",
    lines: [
      "An editor switch was made for component 'Geometry' involving the file 'C:₩Users₩user₩AppData₩Local₩Temp₩WB_user_17712_9₩wbnew_files₩dp0₩FFF₩DM₩FFF.dsco'. All",
      "parameters for this component, if any, have been cleared or replaced.",
    ],
    date: "2024-09-01 오후 11:23:13",
    h: 34,
  },
];

/* ---------- properties ---------- */

const PropertiesPanel = styled.aside`
  width: 320px;
  flex: none;
  display: flex;
  flex-direction: column;
  border-left: 1px solid #8a8a8a;
`;

const PropsBody = styled.div`
  padding: 2px 3px 0 2px;
`;

const PropRow = styled.tr`
  height: 20px;
`;

const SectionCell = styled.td`
  background: #808080;
  color: #fff;
  padding-left: 5px !important;
`;

const SectionInner = styled.div`
  display: flex;
  align-items: center;
  gap: 10px;
`;

const PropName = styled.td`
  background: #fff;
  padding-left: 39px !important;
`;

const PropValue = styled.td<{ $blank?: boolean }>`
  background: ${(p) => (p.$blank ? "#ebebeb" : "#fff")};
  padding-left: 6px !important;
  padding-bottom: 0 !important;
`;

const ComboInner = styled.div`
  display: flex;
  align-items: center;
  justify-content: space-between;
  padding-right: 1px;
`;

const ComboButton = styled.i`
  width: 15px;
  height: 15px;
  display: flex;
  align-items: center;
  justify-content: center;
  background: #d8d8d8;
  box-shadow: inset -1px -1px 0 #808080, inset 1px 1px 0 #fff;
`;

/* ---------- status bar ---------- */

const StatusBar = styled.footer`
  height: 25px;
  flex: none;
  display: flex;
  align-items: center;
  padding: 0 16px 0 7px;
  border-top: 1px solid #d8d8d8;
`;

const Lamps = styled.div`
  display: flex;
  flex-direction: column;
  margin-right: 11px;
`;

const Lamp = styled.i<{ $on?: boolean }>`
  width: 8px;
  height: 8px;
  border-radius: 50%;
  background: ${(p) => (p.$on ? "#1fc61f" : "#b8b8b8")};
`;

const StatusText = styled(Txt)`
  flex: 1;
`;

const StatusButtons = styled.div`
  display: flex;
  gap: 4px;
  letter-spacing: -0.36px;
`;

const StatusButton = styled.div<{ $w: number; $active?: boolean }>`
  width: ${(p) => p.$w}px;
  height: 20px;
  display: flex;
  align-items: center;
  gap: 1px;
  padding-left: 3px;
  white-space: nowrap;
  background: ${(p) => (p.$active ? "#d6e6f7" : "#d4d4d4")};
  border: 1px solid ${(p) => (p.$active ? "#3a7abf" : "#fafafa")};
  border-radius: 3px;
`;

const LinkText = styled.span`
  margin-top: 1px;
  letter-spacing: -0.2px;
`;

const Funnel = styled.div`
  margin-top: 2px;
`;

const systemA: [string, string][] = [
  ["Fluid Flow (Fluent)", "fluid"],
  ["Geometry", "geometry"],
  ["Mesh", "mesh"],
  ["Setup", "setup"],
  ["Solution", "solution"],
  ["Results", "results"],
];

const systemB: [string, string][] = [
  ["Static Structural", "structural"],
  ["Engineering Data", "book"],
  ["Geometry", "geometry"],
  ["Model", "mesh"],
  ["Setup", "setup"],
  ["Solution", "solution"],
  ["Results", "results"],
];

export default function App() {
  return (
    <Page>
      <GlobalStyle />
      <TitleBar>
        <AppLogo viewBox="0 0 16 16">
          <rect width="16" height="16" fill="#111" />
          <g fill="none" stroke="#e8a010" strokeWidth="1.400">
            <path d="M8 1l3 2v3l-3 2-3-2V3z" />
            <path d="M4 7l3 2v3l-3 2-3-2V9z" />
            <path d="M12 7l3 2v3l-3 2-3-2V9z" />
          </g>
        </AppLogo>
        <TitleText>HERO_Wings - Workbench</TitleText>
        <WindowGroup>
          <WindowButton aria-label="minimize">
            <svg width="11" height="11" viewBox="0 0 11 11">
              <path d="M0 5.500h10" stroke="#111" />
            </svg>
          </WindowButton>
          <WindowButton aria-label="restore">
            <svg width="11" height="11" viewBox="0 0 11 11">
              <path d="M.5 2.500h7v7.500h-7zM2.500 2.500v-2h7.500v7.500h-2.500" fill="none" stroke="#111" />
            </svg>
          </WindowButton>
          <WindowButton aria-label="close">
            <svg width="11" height="11" viewBox="0 0 11 11">
              <path d="M.5.5l10 10M10.500.5l-10 10" stroke="#111" />
            </svg>
          </WindowButton>
        </WindowGroup>
      </TitleBar>

      <MenuBar>
        {["File", "View", "Tools", "Units", "Extensions", "Jobs", "Help"].map((m) => (
          <span key={m}>{m}</span>
        ))}
      </MenuBar>

      <ToolRow>
        <Tool name="openGlobe" />
        <Tool name="saveGlobe" />
        <Tool name="saveAsGlobe" />
        <Tool name="greyGlobe" />
      </ToolRow>

      <TabRow>
        <Tool name="newDoc" />
        <Tool name="openFolder" />
        <Tool name="save" />
        <Tool name="saveAs" />
        <ProjectTab>
          <Tool name="tabLayout" />
          <Txt>Project</Txt>
        </ProjectTab>
      </TabRow>

      <CommandRow>
        <Command>
          <Tool name="importDoc" />
          <Txt>Import...</Txt>
        </Command>
        <CommandSep />
        <Command $off>
          <Tool name="reconnect" />
          <Txt>Reconnect</Txt>
        </Command>
        <Command>
          <Tool name="refresh" />
          <Txt>Refresh Project</Txt>
        </Command>
        <Command>
          <Tool name="bolt" />
          <Txt>Update Project</Txt>
        </Command>
        <CommandSep />
        <Command>
          <Tool name="actGrid" />
          <Txt>ACT Start Page</Txt>
        </Command>
      </CommandRow>

      <Workspace>
        <ToolboxPanel>
          <PanelHead $right={6}>
            <HeadTitle>Toolbox</HeadTitle>
            <PanelControls />
          </PanelHead>
          <ToolboxBody>
            <ToolList>
              <GroupHead>
                <MinusBox />
                <Txt>Analysis Systems</Txt>
              </GroupHead>
              {analysis.map(([label, icon, clock]) => (
                <ToolItem key={label}>
                  <Icon name={icon} clock={clock} />
                  <Txt>{label}</Txt>
                </ToolItem>
              ))}
              <GroupHead $gap={1}>
                <MinusBox />
                <Txt>Component Systems</Txt>
              </GroupHead>
              {components.map(([label, icon]) => (
                <ToolItem key={label}>
                  <Icon name={icon} />
                  <Txt>{label}</Txt>
                </ToolItem>
              ))}
            </ToolList>
            <ToolboxScroll />
          </ToolboxBody>
          <ToolboxFoot>
            <Funnel>
              <Tool name="funnel" />
            </Funnel>
            <LinkText>View All / Customize...</LinkText>
          </ToolboxFoot>
        </ToolboxPanel>

        <CenterColumn>
          <SchematicPanel>
            <PanelHead $tint="blue">
              <HeadTitle>Project Schematic</HeadTitle>
              <PanelControls />
            </PanelHead>
            <Canvas>
              <SystemBlock x={40} w={178} letter="A" rows={systemA} caption="Fluid Flow (Fluent)" captionLeft={43} />
              <SystemBlock x={278} w={171} letter="B" rows={systemB} caption="Static Structural" captionLeft={45} />
              <Wires viewBox="0 0 400 220">
                <path d="M218 91c25 0 30 22 56 22" fill="none" stroke="#2a2a8a" strokeWidth="1.300" />
                <rect x="272" y="109" width="8" height="8" fill="#00007f" />
                <path d="M218 157h58" stroke="#e58ae8" strokeWidth="1.500" />
                <circle cx="275" cy="157" r="3.500" fill="#e040e8" />
              </Wires>
            </Canvas>
          </SchematicPanel>

          <MessagesPanel>
            <PanelHead>
              <HeadTitle>Messages</HeadTitle>
              <PanelControls />
            </PanelHead>
            <MessagesBody>
              <GridClip>
                <GridTable>
                  <colgroup>
                    <col width="45" />
                    <col width="83" />
                    <col width="898" />
                    <col width="148" />
                    <col width="148" />
                  </colgroup>
                  <thead>
                    <LetterRow>
                      <th />
                      <th>A</th>
                      <th>B</th>
                      <th>C</th>
                      <th>D</th>
                    </LetterRow>
                    <LabelRow>
                      <th>1</th>
                      <th>Type</th>
                      <th>Text</th>
                      <th>Association</th>
                      <th>Date/Time</th>
                    </LabelRow>
                  </thead>
                  <tbody>
                    {msgs.map((m) => {
                      const err = m.type === "Error!";
                      return (
                        <MessageRow key={m.n} $h={m.h}>
                          <NumCell>{m.n}</NumCell>
                          <TextCell $center $err={err}>
                            {m.type}
                          </TextCell>
                          <TextCell $err={err}>
                            {m.lines.map((line) => (
                              <MessageLine key={line}>{withWon(line)}</MessageLine>
                            ))}
                          </TextCell>
                          <TextCell />
                          <DateCell $err={err}>{m.date}</DateCell>
                        </MessageRow>
                      );
                    })}
                  </tbody>
                </GridTable>
              </GridClip>
              <MessagesScroll />
            </MessagesBody>
          </MessagesPanel>
        </CenterColumn>

        <PropertiesPanel>
          <PanelHead $right={4}>
            <HeadTitle>Properties of Project Schematic</HeadTitle>
            <PanelControls />
          </PanelHead>
          <PropsBody>
            <GridTable>
              <colgroup>
                <col width="44" />
                <col width="121" />
                <col width="149" />
              </colgroup>
              <thead>
                <LetterRow $h={24}>
                  <th />
                  <ShiftedHead>A</ShiftedHead>
                  <th>B</th>
                </LetterRow>
                <LabelRow>
                  <th>1</th>
                  <ShiftedHead>Property</ShiftedHead>
                  <th>Value</th>
                </LabelRow>
              </thead>
              <tbody>
                <PropRow>
                  <NumCell>2</NumCell>
                  <SectionCell colSpan={2}>
                    <SectionInner>
                      <MinusBox $dark />
                      Notes
                    </SectionInner>
                  </SectionCell>
                </PropRow>
                <PropRow>
                  <NumCell>3</NumCell>
                  <PropName>Notes</PropName>
                  <PropValue $blank />
                </PropRow>
                <PropRow>
                  <NumCell>4</NumCell>
                  <SectionCell colSpan={2}>
                    <SectionInner>
                      <MinusBox $dark />
                      Solution Process
                    </SectionInner>
                  </SectionCell>
                </PropRow>
                <PropRow>
                  <NumCell>5</NumCell>
                  <PropName>Update Option</PropName>
                  <PropValue>
                    <ComboInner>
                      Foreground
                      <ComboButton>
                        <DownArrow />
                      </ComboButton>
                    </ComboInner>
                  </PropValue>
                </PropRow>
              </tbody>
            </GridTable>
          </PropsBody>
        </PropertiesPanel>
      </Workspace>

      <StatusBar>
        <Lamps>
          <Lamp />
          <Lamp $on />
        </Lamps>
        <StatusText>Ready</StatusText>
        <StatusButtons>
          <StatusButton $w={97}>
            <Tool name="monitor" />
            <Txt>Job Monitor...</Txt>
          </StatusButton>
          <StatusButton $w={121}>
            <Tool name="screen" />
            <Txt>No DPS Connection</Txt>
          </StatusButton>
          <StatusButton $w={208}>
            <Tool name="screen" />
            <Txt>No HPC Platform Services Connection</Txt>
          </StatusButton>
          <StatusButton $w={99}>
            <Tool name="progress" />
            <Txt>Show Progress</Txt>
          </StatusButton>
          <StatusButton $w={116} $active>
            <Tool name="alert" />
            <Txt>Hide 15 Messages</Txt>
          </StatusButton>
        </StatusButtons>
      </StatusBar>
    </Page>
  );
}
